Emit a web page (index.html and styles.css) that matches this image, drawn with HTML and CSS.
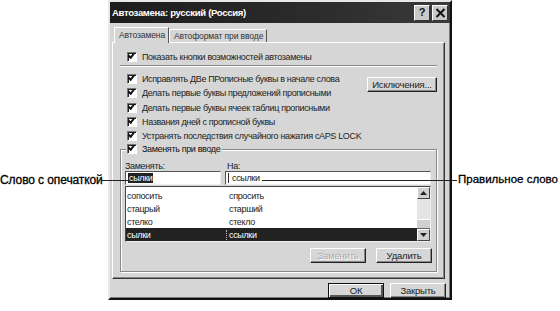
FILE: index.html
```html
<!DOCTYPE html>
<html lang="ru">
<head>
<meta charset="utf-8">
<title>Автозамена</title>
<link rel="stylesheet" href="styles.css">
</head>
<body>
<div class="stage">
  <div class="dialog">
    <div class="titlebar">
      <span class="title">Автозамена: русский (Россия)</span>
      <span class="tb-buttons">
        <span class="tb-btn">?</span>
        <span class="tb-btn tb-close">
          <svg width="11" height="10" viewBox="0 0 11 10"><path d="M1.5 1 L9.5 9 M9.5 1 L1.5 9" stroke="#111" stroke-width="2"/></svg>
        </span>
      </span>
    </div>
    <div class="tabs">
      <span class="tab active">Автозамена</span>
      <span class="tab">Автоформат при вводе</span>
    </div>
    <div class="panel">
      <div class="row first"><span class="cb"></span><span>Показать кнопки возможностей автозамены</span></div>
      <div class="sep"></div>
      <div class="opts">
        <div class="opt-list">
          <div class="row"><span class="cb"></span><span>Исправлять ДВе ПРописные буквы в начале слова</span></div>
          <div class="row"><span class="cb"></span><span>Делать первые буквы предложений прописными</span></div>
          <div class="row"><span class="cb"></span><span>Делать первые буквы ячеек таблиц прописными</span></div>
          <div class="row"><span class="cb"></span><span>Названия дней с прописной буквы</span></div>
          <div class="row"><span class="cb"></span><span>Устранять последствия случайного нажатия cAPS LOCK</span></div>
        </div>
        <div class="btn exc">Исключения...</div>
      </div>
      <div class="group">
        <div class="legend"><span class="cb"></span><span>Заменять при вводе</span></div>
        <div class="labels"><span class="lab1">Заменять:</span><span class="lab2">На:</span></div>
        <div class="inputs">
          <div class="input in1"><span class="selected">сылки</span></div>
          <div class="input in2"><span class="caret"></span>ссылки</div>
        </div>
        <div class="list">
          <div class="list-rows">
            <div class="lrow"><span class="c1">сопосить</span><span class="c2">спросить</span></div>
            <div class="lrow"><span class="c1">стацрый</span><span class="c2">старший</span></div>
            <div class="lrow"><span class="c1">стелко</span><span class="c2">стекло</span></div>
            <div class="lrow sel"><span class="c1">сылки</span><span class="c2">ссылки</span></div>
          </div>
          <div class="scroll">
            <span class="arrow"><svg width="7" height="4" viewBox="0 0 7 4"><path d="M0 4 L3.5 0 L7 4Z" fill="#222"/></svg></span>
            <span class="track"><span class="thumb"></span></span>
            <span class="arrow"><svg width="7" height="4" viewBox="0 0 7 4"><path d="M0 0 L3.5 4 L7 0Z" fill="#222"/></svg></span>
          </div>
        </div>
        <div class="gbtns">
          <div class="btn disabled">Заменить</div>
          <div class="btn">Удалить</div>
        </div>
      </div>
    </div>
    <div class="footer">
      <div class="btn default">ОК</div>
      <div class="btn">Закрыть</div>
    </div>
  </div>
  <div class="callout left">Слово с опечаткой</div>
  <div class="callout right">Правильное слово</div>
  <div class="cline cl-left"></div>
  <div class="cline cl-right"></div>
</div>
</body>
</html>
```
FILE: styles.css
```css
html, body {
  margin: 0;
  padding: 0;
  background: #ffffff;
}
body {
  width: 560px;
  height: 311px;
  overflow: hidden;
  font-family: "Liberation Sans", Arial, sans-serif;
  font-size: 9px;
  letter-spacing: -0.35px;
  color: #111;
}
.stage {
  position: relative;
  width: 560px;
  height: 311px;
  display: flex;
  padding-left: 108px;
  box-sizing: border-box;
}
.dialog {
  width: 344px;
  height: 300px;
  box-sizing: border-box;
  background: #d6d6d6;
  border: 2px solid;
  border-color: #e8e8e8 #111 #111 #e8e8e8;
  box-shadow: inset -1px -1px 0 #7a7a7a;
  display: flex;
  flex-direction: column;
}
.titlebar {
  height: 21px;
  flex: none;
  background: linear-gradient(90deg, #1c1c1c, #2c2c2c 60%, #3a3a3a);
  display: flex;
  align-items: center;
  justify-content: space-between;
  padding: 0 2px 0 2px;
}
.title {
  color: #fff;
  font-weight: bold;
  font-size: 9.5px;
  letter-spacing: -0.3px;
}
.tb-buttons {
  display: flex;
  gap: 2px;
}
.tb-btn {
  width: 14px;
  height: 14px;
  background: #c8c8c8;
  border: 1px solid;
  border-color: #fff #333 #333 #fff;
  display: flex;
  align-items: center;
  justify-content: center;
  font-weight: bold;
  font-size: 11px;
  color: #111;
  line-height: 1;
  letter-spacing: 0;
}
.tabs {
  display: flex;
  align-items: flex-end;
  height: 15px;
  flex: none;
  margin-top: 4px;
  padding-left: 4px;
  position: relative;
  z-index: 1;
}
.tab {
  height: 12px;
  padding: 0 3px 0 4px;
  border: 1px solid;
  border-bottom: none;
  border-color: #fff #555 transparent #fff;
  display: flex;
  align-items: center;
  font-size: 8.5px;
  color: #333;
  letter-spacing: -0.1px;
}
.tab.active {
  height: 14px;
  margin-bottom: -1px;
  background: #d6d6d6;
  padding: 0 3px 1px 4px;
}
.panel {
  margin: 0 5px 0 2px;
  height: 237px;
  flex: none;
  box-sizing: border-box;
  border: 1px solid;
  border-color: #fff #333 #333 #fff;
  box-shadow: inset -1px -1px 0 #888;
  padding: 0 7px 0 14px;
  display: flex;
  flex-direction: column;
}
.row {
  display: flex;
  align-items: center;
  height: 14.2px;
  gap: 5px;
  white-space: nowrap;
  color: #222;
}
.row.first {
  margin-top: 7px;
}
.cb {
  width: 8px;
  height: 8px;
  flex: none;
  background: #fff;
  border: 1px solid;
  border-color: #777 #fff #fff #777;
  box-shadow: inset 1px 1px 0 #222;
  position: relative;
}
.cb::after {
  content: "";
  position: absolute;
  left: 1px;
  top: 0px;
  width: 4px;
  height: 2px;
  border-left: 2px solid #111;
  border-bottom: 2px solid #111;
  transform: rotate(-50deg);
  transform-origin: 3px 3px;
}
.sep {
  height: 0;
  border-top: 1px solid #888;
  border-bottom: 1px solid #fff;
  margin: 1px 0 5px -7px;
}
.opts {
  display: flex;
  justify-content: space-between;
}
.opt-list {
  display: flex;
  flex-direction: column;
}
.btn {
  height: 15px;
  flex: none;
  box-sizing: border-box;
  border: 1px solid;
  border-color: #fff #222 #222 #fff;
  box-shadow: inset -1px -1px 0 #888;
  background: #d6d6d6;
  display: flex;
  align-items: center;
  justify-content: center;
  color: #222;
  white-space: nowrap;
  letter-spacing: -0.2px;
}
.btn.exc {
  width: 70px;
  margin-top: 5px;
  font-size: 9.5px;
}
.group {
  margin: 6px 0 0 -7px;
  height: 123px;
  flex: none;
  box-sizing: border-box;
  border: 1px solid #888;
  box-shadow: 1px 1px 0 #fff, inset 1px 1px 0 #fff;
  padding: 0 4px 0 4px;
  display: flex;
  flex-direction: column;
}
.legend {
  display: flex;
  align-items: center;
  gap: 5px;
  height: 12px;
  margin: -7px 0 0 1px;
  padding: 0 2px 0 1px;
  background: #d6d6d6;
  align-self: flex-start;
}
.labels {
  display: flex;
  margin-top: 5px;
  height: 11px;
  align-items: center;
  color: #222;
}
.lab1 { width: 102px; }
.inputs {
  display: flex;
  gap: 4px;
}
.input {
  height: 14px;
  box-sizing: border-box;
  background: #fff;
  border: 1px solid;
  border-color: #555 #eee #eee #555;
  display: flex;
  align-items: center;
  padding-left: 2px;
}
.in1 { width: 96px; }
.in2 { width: 206px; }
.selected {
  background: #222;
  color: #fff;
  padding: 0 1px;
  line-height: 10px;
}
.caret {
  width: 1px;
  height: 10px;
  background: #333;
  margin-right: 3px;
}
.list {
  margin-top: 1px;
  width: 306px;
  height: 56px;
  box-sizing: border-box;
  background: #fff;
  border: 1px solid;
  border-color: #444 #eee #eee #444;
  display: flex;
}
.list-rows {
  flex: 1;
  display: flex;
  flex-direction: column;
  padding-top: 2px;
}
.lrow {
  height: 13px;
  display: flex;
  align-items: center;
  color: #222;
}
.c1 { width: 99px; padding-left: 1px; }
.c2 { padding-left: 3px; }
.lrow.sel {
  background: #222;
  color: #fff;
}
.lrow.sel .c2 {
  border-left: 1px dotted #bbb;
  padding-left: 2px;
}
.scroll {
  width: 13px;
  display: flex;
  flex-direction: column;
  background: #e4e4e4;
}
.arrow {
  height: 12px;
  box-sizing: border-box;
  background: #d0d0d0;
  border: 1px solid;
  border-color: #fff #444 #444 #fff;
  display: flex;
  align-items: center;
  justify-content: center;
}
.track {
  flex: 1;
  display: flex;
  flex-direction: column;
  justify-content: flex-end;
}
.thumb {
  height: 8px;
  background: #d0d0d0;
  border-top: 1px solid #fff;
  border-bottom: 1px solid #666;
}
.gbtns {
  display: flex;
  justify-content: flex-end;
  gap: 10px;
  margin-top: 6px;
}
.gbtns .btn {
  width: 56px;
  font-size: 9.5px;
}
.btn.disabled {
  color: #aaa;
  text-shadow: 1px 1px 0 #fff;
}
.footer {
  display: flex;
  justify-content: flex-end;
  gap: 6px;
  margin-top: 4px;
  padding-right: 4px;
}
.footer .btn {
  width: 56px;
  height: 15px;
  font-size: 9.5px;
}
.btn.default {
  border: 1px solid #111;
  box-shadow: inset 1px 1px 0 #fff, inset -2px -2px 0 #555;
}
.callout {
  position: absolute;
  top: 173px;
  font-size: 12px;
  color: #000;
  white-space: nowrap;
  letter-spacing: -0.1px;
  -webkit-text-stroke: 0.3px #000;
}
.callout.left { left: 0; }
.callout.right { left: 458px; font-size: 11.5px; letter-spacing: 0; }
.cline {
  position: absolute;
  top: 180px;
  height: 1px;
  background: #222;
}
.cl-left { left: 101px; width: 27px; }
.cl-right { left: 262px; width: 195px; }
```
